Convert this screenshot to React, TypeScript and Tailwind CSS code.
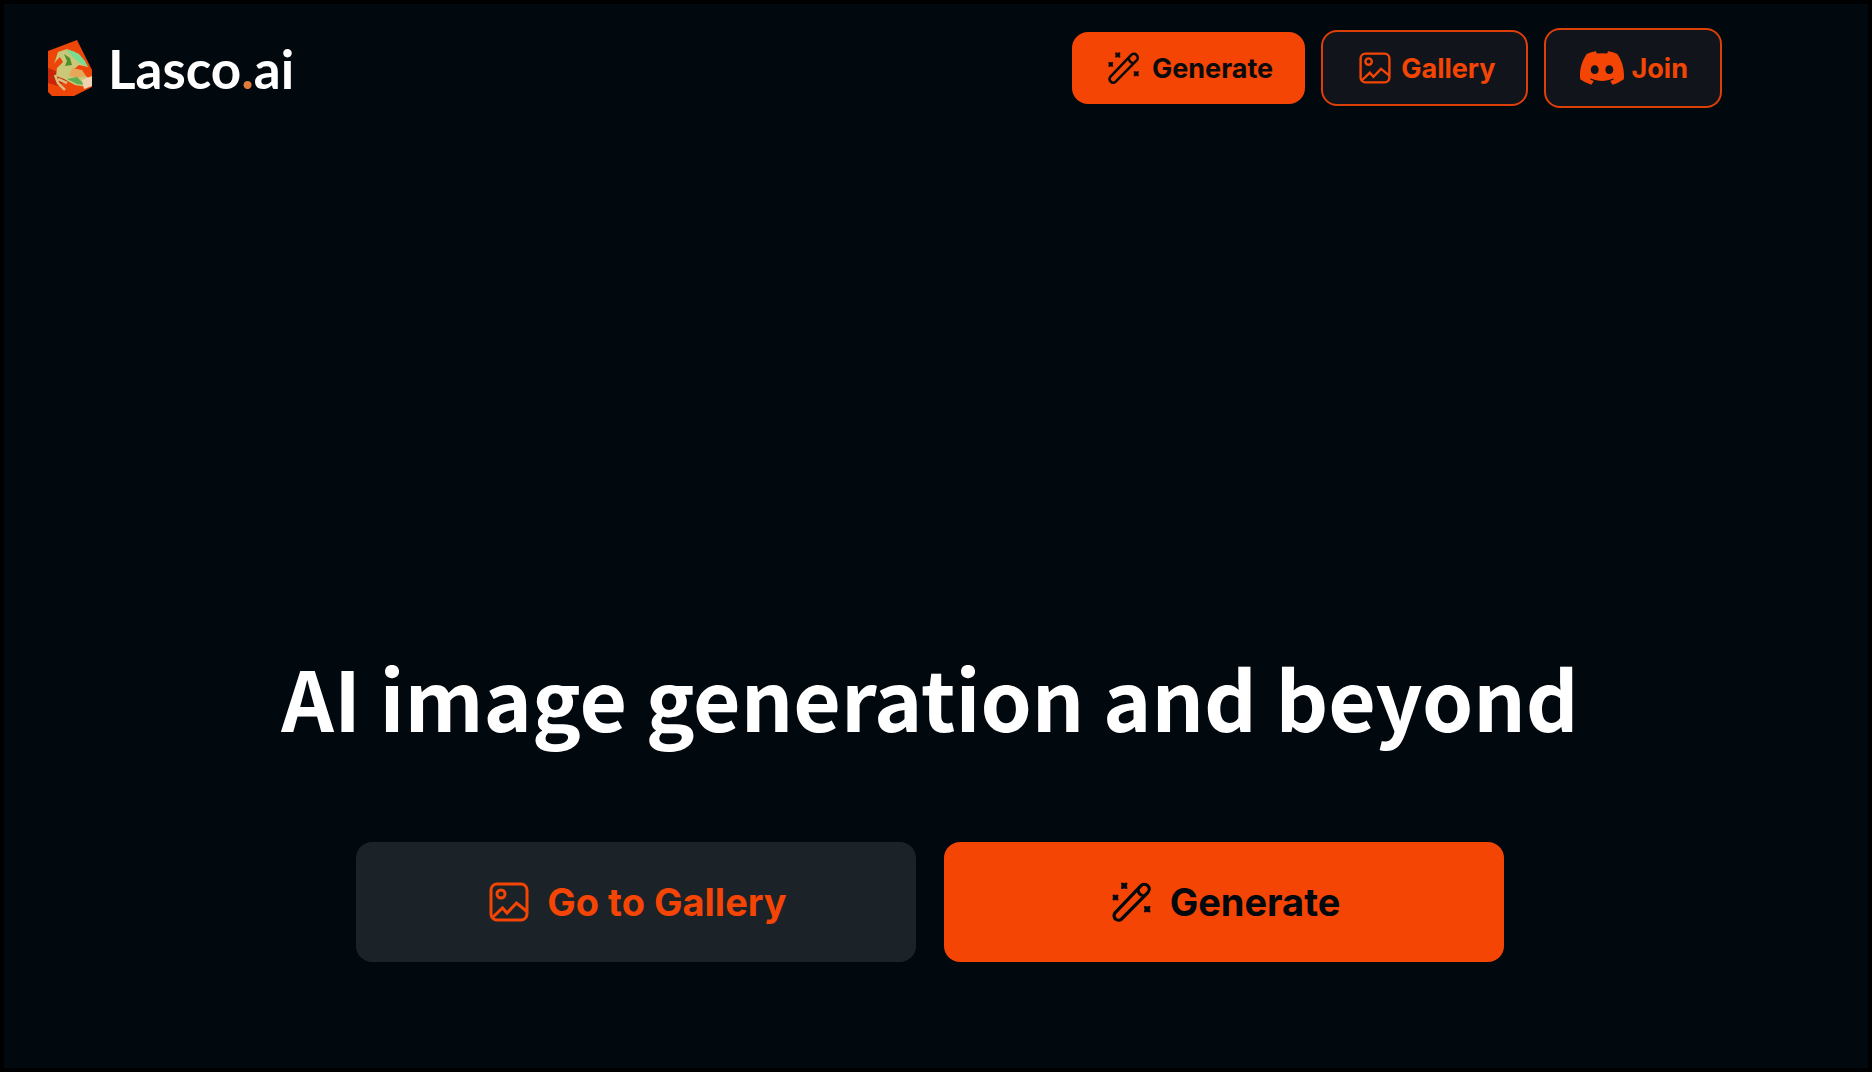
import { BsDiscord } from 'react-icons/bs'

function WandIcon({ className }: { className: string }) {
  return (
    <svg viewBox="0 0 40 40" className={className} fill="none" aria-hidden="true">
      <path
        d="M2.8 31.2 28.8 3.8a4.8 4.8 0 0 1 7 6.8L9.6 37a4.5 4.5 0 0 1-6.8-5.8Z"
        stroke="currentColor"
        strokeWidth="3.2"
      />
      <path d="m26 7.6q.5 5.5 6 6.4" stroke="currentColor" strokeWidth="3" />
      <path
        d="m9.5 1 2.7.5 2.800-.5-.5 2.800.5 2.700-2.800-.5-2.700.5.500-2.700ZM1 13l2.500.4L6 13l-.4 2.500L6 18l-2.500-.4L1 18l.4-2.500ZM32.500 24.500l2.700.5 2.800-.5-.5 2.800.5 2.700-2.800-.5-2.700.5.5-2.700Z"
        fill="currentColor"
        stroke="currentColor"
      />
    </svg>
  )
}

function PictureIcon({ className }: { className: string }) {
  return (
    <svg viewBox="0 0 40 40" className={className} fill="none" stroke="currentColor" strokeWidth="3" aria-hidden="true">
      <rect x="2" y="2" width="36" height="36" rx="6" />
      <circle cx="12" cy="12" r="4" />
      <path d="m4 35 9.5-9 4.5 5L27.5 21 38 29.5" />
    </svg>
  )
}

function HorseLogo() {
  return (
    <svg viewBox="0 0 44 56" className="h-14 w-11" aria-hidden="true">
      <path d="M0 11 29 0l5 10 10 20v17l-18 9H4l-4-4Z" fill="#ee4508" />
      <path d="m0 28 10 4 8-4 2 12-10 6-10-3Z" fill="#c92509" />
      <path d="M6 24 10 12l9-3 12 5 9 13-9-2-5 4 15 9-2 9-12-2-11-6-8-3 1-8 6-6-3-5-4 4Z" fill="#c9c878" />
      <path d="M18 10c9-1 19 8 22 17l-10-5-7-7Z" fill="#79dc93" />
      <path d="M16 14l6 4 2 7-7 1 2-5Z" fill="#4f8f2c" />
      <path d="m24 28 10 2 4 6-9 2-8-2Z" fill="#e5a758" />
      <path d="m19 39 10-2 8 8-8-1Z" fill="#5fae50" />
      <path d="m34 40 10-4v10l-8 3Z" fill="#f0d3b0" />
      <path d="m7 35 3 8 7 7m-7-11 9 4" fill="none" stroke="#d9bc7c" strokeWidth="2.5" />
    </svg>
  )
}

export default function App() {
  return (
    <div className="flex min-h-screen flex-col border-4 border-black bg-[#01080e] font-['Inter',sans-serif] font-bold">
      <header className="flex items-center justify-between pt-6 pr-[146px] pl-11">
        <a href="#" className="flex items-center gap-4 font-['Lato',sans-serif] text-[53px] leading-none font-bold text-white">
          <HorseLogo />
          <span>
            Lasco<span className="text-[#e07b39]">.</span>ai
          </span>
        </a>
        <nav className="flex items-center gap-4 text-[27px] leading-none">
          <button className="flex h-18 items-center gap-3 rounded-2xl bg-[#f44505] pr-8 pl-9 text-[#0b0b0d]">
            <WandIcon className="size-8" />
            Generate
          </button>
          <button className="flex h-19 items-center gap-2.5 rounded-2xl border-2 border-[#dc3f07] bg-[#11151b] pr-[30px] pl-9 text-[#f44505]">
            <PictureIcon className="size-8" />
            Gallery
          </button>
          <button className="flex h-20 items-center gap-2 rounded-2xl border-2 border-[#dc3f07] bg-[#11151b] pr-8 pl-[34px] text-[#f44505]">
            <BsDiscord className="size-11" />
            Join
          </button>
        </nav>
      </header>

      <main className="flex flex-1 flex-col items-center justify-end pr-3 pb-[106px]">
        <h1 className="font-['Noto_Sans_CJK_SC',sans-serif] text-[82px] leading-none font-bold text-white">
          AI image generation and beyond
        </h1>
        <div className="mt-26 flex gap-7 text-[38px] leading-none">
          <button className="flex h-30 w-140 items-center justify-center gap-[18px] rounded-2xl bg-[#1b2228] pl-1 text-[#f44505]">
            <PictureIcon className="size-10" />
            Go to Gallery
          </button>
          <button className="flex h-30 w-140 items-center justify-center gap-[18px] rounded-2xl bg-[#f44505] pl-1 text-[#01080e]">
            <WandIcon className="size-10" />
            Generate
          </button>
        </div>
      </main>
    </div>
  )
}
